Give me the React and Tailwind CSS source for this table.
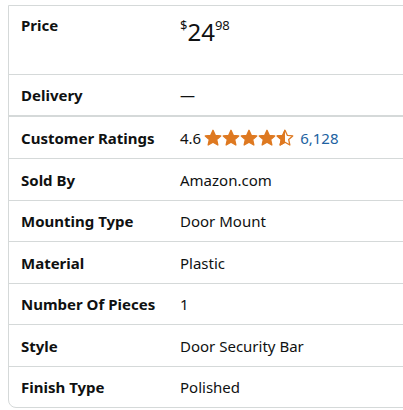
const ROWS = [
  { label: 'Sold By', value: 'Amazon.com', h: 'h-[42px]' },
  { label: 'Mounting Type', value: 'Door Mount', h: 'h-[41px]' },
  { label: 'Material', value: 'Plastic', h: 'h-[42px]' },
  { label: 'Number Of Pieces', value: '1', h: 'h-[41px]' },
  { label: 'Style', value: 'Door Security Bar', h: 'h-[42px]' },
  { label: 'Finish Type', value: 'Polished', h: 'h-[40px]' },
];

const STAR = 'M9 1.3l2.3 5 5.45.6-4.05 3.7 1.15 5.4L9 13.25 4.15 16l1.15-5.4L1.25 6.9l5.45-.6z';

function Star({ half }) {
  return (
    <svg width="18" height="18" viewBox="0 0 18 18" className="shrink-0">
      {half ? (
        <>
          <defs>
            <clipPath id="lefthalf">
              <rect x="0" y="0" width="9" height="18" />
            </clipPath>
          </defs>
          <path d={STAR} fill="none" stroke="#de7921" strokeWidth="1.3" strokeLinejoin="round" />
          <path d={STAR} fill="#de7921" stroke="#de7921" strokeWidth="1.3" strokeLinejoin="round" clipPath="url(#lefthalf)" />
        </>
      ) : (
        <path d={STAR} fill="#de7921" stroke="#de7921" strokeWidth="1.3" strokeLinejoin="round" />
      )}
    </svg>
  );
}

function Row({ label, children, h, extra = '' }) {
  return (
    <div className={`flex items-center ${h} ${extra}`}>
      <div className="w-[159px] shrink-0 pl-3 font-bold">{label}</div>
      <div className="pl-3 flex items-center">{children}</div>
    </div>
  );
}

export default function App() {
  return (
    <div className="w-[403px] h-[410px] overflow-hidden bg-white pt-[5px] pl-[8px] text-[15px] leading-5 text-[#0f1111]" style={{ fontFamily: '"Noto Sans", Arial, sans-serif' }}>
      <div className="w-[420px] border border-[#d5d9d9] rounded-bl-lg">
        {/* price */}
        <div className="flex h-[69px] border-b border-[#d5d9d9]">
          <div className="w-[159px] shrink-0 pl-3 pt-[9px] font-bold">Price</div>
          <div className="pl-3 pt-[14px] flex items-start leading-none">
            <span className="text-[13px] -mt-[1px]">$</span>
            <span className="text-[24px]">24</span>
            <span className="text-[13px] -mt-[1px]">98</span>
          </div>
        </div>

        <Row label="Delivery" h="h-[42px]" extra="border-b-2 border-[#d5d9d9]">
          <span>—</span>
        </Row>

        <Row label="Customer Ratings" h="h-[42px]" extra="border-b border-[#d5d9d9]">
          <span className="mr-[3px]">4.6</span>
          <div className="flex items-center">
            <Star />
            <Star />
            <Star />
            <Star />
            <Star half />
          </div>
          <span className="ml-[6px] text-[#2162a1]">6,128</span>
        </Row>

        {ROWS.map((r, i) => (
          <Row key={r.label} label={r.label} h={r.h} extra={i < ROWS.length - 1 ? 'border-b border-[#d5d9d9]' : ''}>
            <span>{r.value}</span>
          </Row>
        ))}
      </div>
    </div>
  );
}
